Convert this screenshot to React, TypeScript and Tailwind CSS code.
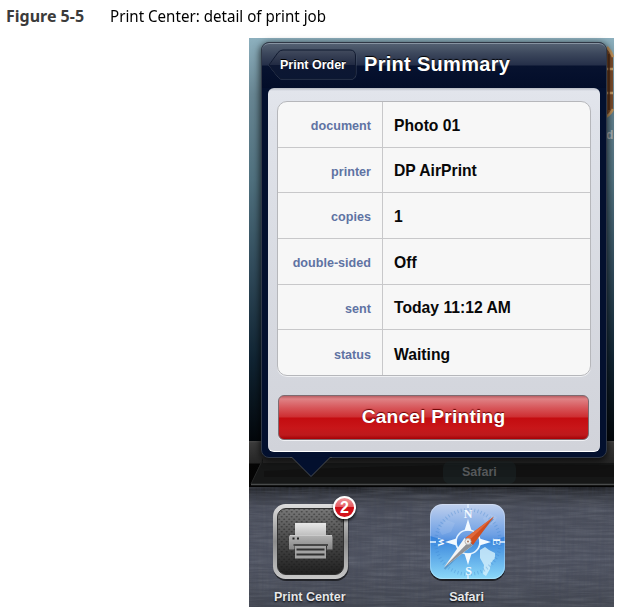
const rows: [string, string][] = [
  ['document', 'Photo 01'],
  ['printer', 'DP AirPrint'],
  ['copies', '1'],
  ['double-sided', 'Off'],
  ['sent', 'Today 11:12 AM'],
  ['status', 'Waiting'],
];

function PrinterIcon() {
  return (
    <svg width="79" height="79" viewBox="0 0 79 79" className="block shrink-0">
      <defs>
        <linearGradient id="rim" x1="0" y1="0" x2="0" y2="1">
          <stop offset="0" stopColor="#dedede" />
          <stop offset=".5" stopColor="#8d8d8d" />
          <stop offset="1" stopColor="#c8c8c8" />
        </linearGradient>
        <linearGradient id="face" x1="0" y1="0" x2="0" y2="1">
          <stop offset="0" stopColor="#777" />
          <stop offset=".45" stopColor="#4b4b4b" />
          <stop offset="1" stopColor="#202020" />
        </linearGradient>
        <linearGradient id="paper" x1="0" y1="0" x2="0" y2="1">
          <stop offset="0" stopColor="#e8e8e8" />
          <stop offset="1" stopColor="#bcbcbc" />
        </linearGradient>
        <linearGradient id="machine" x1="0" y1="0" x2="0" y2="1">
          <stop offset="0" stopColor="#b4b4b4" />
          <stop offset="1" stopColor="#858585" />
        </linearGradient>
        <pattern id="dots" width="5" height="5" patternUnits="userSpaceOnUse">
          <ellipse cx="1.2" cy="1.2" rx="1.100" ry=".8" fill="#151515" opacity=".45" />
          <ellipse cx="3.7" cy="3.7" rx="1.100" ry=".8" fill="#151515" opacity=".45" />
        </pattern>
      </defs>
      <rect x=".5" y="3" width="75" height="75" rx="12.5" fill="#000" opacity=".55" />
      <rect x="0" y="1" width="75" height="75" rx="12.5" fill="url(#rim)" />
      <rect x="4.500" y="5.500" width="66" height="66" rx="8.500" fill="url(#face)" stroke="#303030" />
      <rect x="5" y="6" width="65" height="65" rx="8.500" fill="url(#dots)" />
      <rect x="22" y="20" width="31" height="13" fill="url(#paper)" />
      <path d="M18 32h39.500q2 0 2 2v12.500H54V43H21.500v3.500H16V34q0-2 2-2z" fill="url(#machine)" />
      <path d="M17 32.500h42" stroke="#cacaca" strokeWidth="1" />
      <rect x="19.500" y="34.500" width="2" height="2" fill="#222" />
      <rect x="24" y="34.500" width="2" height="2" fill="#222" />
      <path d="M20.500 42h34.500" stroke="#2c2c2c" strokeWidth="1.500" />
      <path d="M22 43h31v12.500H22z" fill="#a2a2a2" />
      <path d="M23.500 46.500h28M23.500 51.500h28" stroke="#303030" strokeWidth="2" />
    </svg>
  );
}

function SafariIcon() {
  const ticks = Array.from({ length: 60 }, (_, i) => i);
  return (
    <svg width="79" height="79" viewBox="0 0 79 79" className="block shrink-0">
      <defs>
        <linearGradient id="sea" x1="0" y1="0" x2="0" y2="1">
          <stop offset="0" stopColor="#c3d2ee" />
          <stop offset=".4" stopColor="#6ea0e4" />
          <stop offset=".52" stopColor="#4588dc" />
          <stop offset="1" stopColor="#8ed9f8" />
        </linearGradient>
        <linearGradient id="low" x1="0" y1="0" x2="0" y2="1">
          <stop offset="0" stopColor="#347fda" />
          <stop offset="1" stopColor="#90ddfa" />
        </linearGradient>
        <clipPath id="tile"><rect x="0" y="1" width="75" height="75" rx="12.500" /></clipPath>
      </defs>
      <rect x="0" y="3" width="75" height="75" rx="12.500" fill="#000" opacity=".6" />
      <g clipPath="url(#tile)">
        <rect width="79" height="79" fill="url(#sea)" />
        <path d="M0 33q38 13 77 0v45H0z" fill="url(#low)" />
        <path d="M50 47l5-3 4 3 6 3v5l-4 5-1 6-4 7-3-2 1-9-4-7z" fill="#d5f0fb" opacity=".8" />
        <path d="M53 15l7-4 7 3-3 7-8 2z M8 25l8-8 9 3-4 9-9 3z" fill="#d8e6fa" opacity=".15" />
        {ticks.map((i) => (
          <path key={i} d="M38 5v3.500" stroke="#367dca" strokeWidth="1" opacity=".3" transform={`rotate(${i * 6} 38 39)`} />
        ))}
        <circle cx="38" cy="39" r="12" fill="none" stroke="#e4f3ff" strokeWidth="1.700" />
        <path d="M38 16l3.500 11.500h-7zM38 62l3.500-11.500h-7zM15 39l11.500-3.500v7zM61 39l-11.500-3.500v7z" fill="#f3faff" />
        <path d="M38 1v4M38 72v4M0 39h6M70 39h6" stroke="#e5f3ff" strokeWidth="1.300" />
        <g fill="#f3faff" fontFamily="Liberation Serif, serif" fontWeight="700" fontSize="12" textAnchor="middle">
          <text x="38" y="15">N</text>
          <text x="38.500" y="72">S</text>
          <text transform="translate(10.500 39) rotate(-90)" y="3.500" fontSize="9">W</text>
          <text transform="translate(66 39) rotate(90)" y="3.500" fontSize="11">E</text>
        </g>
        <path d="M14.500 66L39 41.500l24-26" fill="none" stroke="#153a70" strokeWidth="2" opacity=".25" />
        <path d="M64 13.500L43 42l-7.500-7z" fill="#cf4e20" />
        <path d="M64 13.500L35.500 35l3 3z" fill="#e0683b" />
        <path d="M14 64.500L34.500 35l8 7.500z" fill="#f4f4f4" />
        <path d="M14 64.500L38.500 39l4 3.500z" fill="#8f9196" />
        <circle cx="38" cy="38.500" r="3" fill="#f1f1f1" stroke="#b5b5b5" />
        <circle cx="38" cy="38.500" r=".9" fill="#a06a50" />
      </g>
      <rect x=".5" y="1.500" width="74" height="74" rx="12" fill="none" stroke="#fff" opacity=".25" />
    </svg>
  );
}

function Linen() {
  return (
    <svg width="365" height="120" className="absolute inset-0">
      <filter id="weaveH" x="0" y="0" width="100%" height="100%">
        <feTurbulence type="fractalNoise" baseFrequency=".025 .35" numOctaves="3" seed="4" />
        <feColorMatrix values="0 0 0 0 .6  0 0 0 0 .64  0 0 0 0 .72  .7 0 0 0 -.25" />
      </filter>
      <filter id="weaveV" x="0" y="0" width="100%" height="100%">
        <feTurbulence type="fractalNoise" baseFrequency=".3 .02" numOctaves="3" seed="9" />
        <feColorMatrix values="0 0 0 0 .05  0 0 0 0 .06  0 0 0 0 .1  .8 0 0 0 -.25" />
      </filter>
      <rect width="365" height="120" filter="url(#weaveH)" opacity=".4" />
      <rect width="365" height="120" filter="url(#weaveV)" opacity=".6" />
    </svg>
  );
}

function Phone() {
  return (
    <div className="flex h-full flex-col">
      <div className="relative h-[403px] overflow-hidden bg-[linear-gradient(180deg,#8db0be_0%,#688693_14%,#50717f_35%,#304a5a_58%,#102433_80%,#03070b_100%)]">
        <svg width="20" height="110" className="absolute top-0 right-0">
          <path d="M0 6q15 2 19 12v53q-5 8-13 10H0z" fill="#7b4b2a" />
          <path d="M13 9q4 4 6 10M19 71q-2 5-7 8" fill="none" stroke="#c0925a" strokeWidth="2.500" />
          <path d="M12 31h7M12 55h7" stroke="#c99c66" strokeWidth="2.500" />
          <path d="M15 16v56" stroke="#4e2a16" strokeWidth="1.500" />
          <text x="12" y="101" fill="#a9b3b8" fontFamily="Liberation Sans, sans-serif" fontWeight="700" fontSize="12">d</text>
        </svg>
      </div>
      <div className="relative h-[46px] bg-[linear-gradient(180deg,#4b4b4b_0,#3b3b3b_2px,#252525_22px,#050505_23px,#030303_100%)]">
        <svg width="365" height="46" className="absolute inset-0">
          <path d="M14 17L2 43h363V22H14z" fill="#161717" />
          <path d="M15 30q160-8 350-6v12H15z" fill="#0b0c0c" opacity=".5" />
          <rect x="194" y="20" width="73" height="23" rx="7" fill="#1f2d32" opacity=".35" />
          <path d="M13 20L2 43" fill="none" stroke="#262727" />
          <path d="M2 43.500h363" fill="none" stroke="#494b4b" strokeWidth="1.500" />
        </svg>
        <span className="absolute top-[23px] left-[213px] text-[12.5px] leading-[16px] font-bold text-[#55585a]">Safari</span>
      </div>
      <div className="relative h-[120px] bg-[linear-gradient(180deg,#1f2125_0,#383b43_8px,#4a4e5a_22px,#4f5360_60%,#434751_100%)]">
        <Linen />
        <div className="relative flex pt-[16px] pl-[24px]">
          <div className="relative flex w-[75px] flex-col">
            <PrinterIcon />
            <span className="mt-[7px] ml-px w-[75px] text-[12.5px] leading-[16px] font-bold whitespace-nowrap text-[#e6e7e9] [text-shadow:0_1px_2px_#000]">Print Center</span>
            <span className="absolute -top-[7px] left-[60px] flex size-[23px] items-center justify-center rounded-full border-2 border-white bg-[linear-gradient(180deg,#ee989b_0%,#e4575d_48%,#ce0e17_50%,#d5151e_100%)] text-[16px] leading-none font-bold text-white shadow-[0_2px_3px_rgba(0,0,0,0.8)]">2</span>
          </div>
          <div className="ml-[82px] flex w-[75px] flex-col">
            <SafariIcon />
            <span className="mt-[7px] -ml-[2px] text-center text-[12.5px] leading-[16px] font-bold text-[#e6e7e9] [text-shadow:0_1px_2px_#000]">Safari</span>
          </div>
        </div>
      </div>
    </div>
  );
}

function Popover() {
  return (
    <div className="absolute top-[4px] left-[12px] h-[416px] w-[346px] rounded-[8px] border border-[#303846] bg-[#03102e] px-[6px] shadow-[0_2px_7px_1px_rgba(0,0,0,0.7)]">
      <div className="-mx-[6px] flex h-[45px] rounded-t-[7px] border-t border-[#8793a1] bg-[linear-gradient(180deg,#536071_0,#3b465b_10px,#252f49_21px,#07122f_22px,#020d29_100%)]">
        <div className="relative mt-[5px] ml-[6px] h-[32px] w-[89px]">
          <svg width="89" height="32" className="absolute inset-0">
            <defs>
              <linearGradient id="back" x1="0" y1="0" x2="0" y2="1">
                <stop offset="0" stopColor="#424b5e" />
                <stop offset=".5" stopColor="#222b43" />
                <stop offset=".52" stopColor="#0d1732" />
                <stop offset="1" stopColor="#0b1733" />
              </linearGradient>
            </defs>
            <path d="M1 16.500L10 4q2-2.500 5-2.500h67q6 0 6 6v17q0 6-6 6H15q-3 0-5-2.500z" fill="none" stroke="#58647a" opacity=".6" />
            <path d="M1 16L10 3.500Q12 1 15 1h67q5.500 0 5.500 6v17q0 6-5.500 6H15q-3 0-5-2.500z" fill="url(#back)" stroke="#111a30" />
          </svg>
          <span className="relative ml-[12px] block pt-[8px] text-[12.5px] leading-[16px] font-bold whitespace-nowrap text-white [text-shadow:0_-1px_0_#000]">Print Order</span>
        </div>
        <h1 className="mt-[7px] ml-[7px] text-[20px] leading-[26px] font-bold tracking-[0.3px] whitespace-nowrap text-white [text-shadow:0_-1px_1px_#000]">Print Summary</h1>
      </div>
      <div className="h-[364px] rounded-[6px] border-b border-white bg-[linear-gradient(180deg,#b5bac4_0,#e2e5ec_3px,#dfe2e9_35px,#d1d3da_100%)] px-[9px] pt-[13px]">
        <div className="h-[275px] overflow-hidden rounded-[10px] border border-[#b6b7bb] bg-[#f7f7f7] shadow-[0_1px_0_#f0f1f4]">
          {rows.map(([label, value]) => (
            <div key={label} className="flex h-[45.7px] items-center border-b border-[#c8c8ca] last:border-b-0">
              <div className="flex h-full w-[105px] items-center justify-end border-r border-[#c8c8ca] pt-[4px] pr-[11px] text-[12.6px] font-bold text-[#5f73a3]">{label}</div>
              <div className="pt-[2px] pl-[11px] text-[15.7px] font-bold text-[#080808]">{value}</div>
            </div>
          ))}
        </div>
        <button className="mt-[19px] ml-px flex h-[45px] w-[311px] items-center justify-center rounded-[6px] border border-[#7d6b70] bg-[linear-gradient(180deg,#b95e63_0,#df8285_3px,#d75559_12px,#ce2e31_21px,#c40c10_22px,#c81619_32px,#bd1a1d_39px,#a60005_100%)] text-[19.2px] font-bold tracking-[0.2px] text-white shadow-[0_1px_0_#eff0f4] [text-shadow:0_-1px_1px_#650000]">Cancel Printing</button>
      </div>
      <svg width="44" height="22" className="absolute top-[413px] left-[27px]">
        <path d="M3 1L22 21 41 1z" fill="#03102e" />
        <path d="M1 1.500h2L22 20.500 41 1.500h2" fill="none" stroke="#484b4e" />
      </svg>
    </div>
  );
}

export default function App() {
  return (
    <main className="h-[614px] w-[623px] overflow-hidden bg-white font-['Liberation_Sans',sans-serif]">
      <div className="flex h-[38px] pt-[5px] pl-[6px] font-['Noto_Sans',sans-serif] text-[16px] leading-[22px] whitespace-nowrap">
        <div className="w-[103.500px]"><span className="inline-block origin-left font-bold text-[#3b3b3b]">Figure 5-5</span></div>
        <span className="inline-block origin-left scale-x-[0.945] text-black">Print Center: detail of print job</span>
      </div>
      <div className="relative ml-[249px] h-[569px] w-[365px]">
        <Phone />
        <Popover />
      </div>
    </main>
  );
}
